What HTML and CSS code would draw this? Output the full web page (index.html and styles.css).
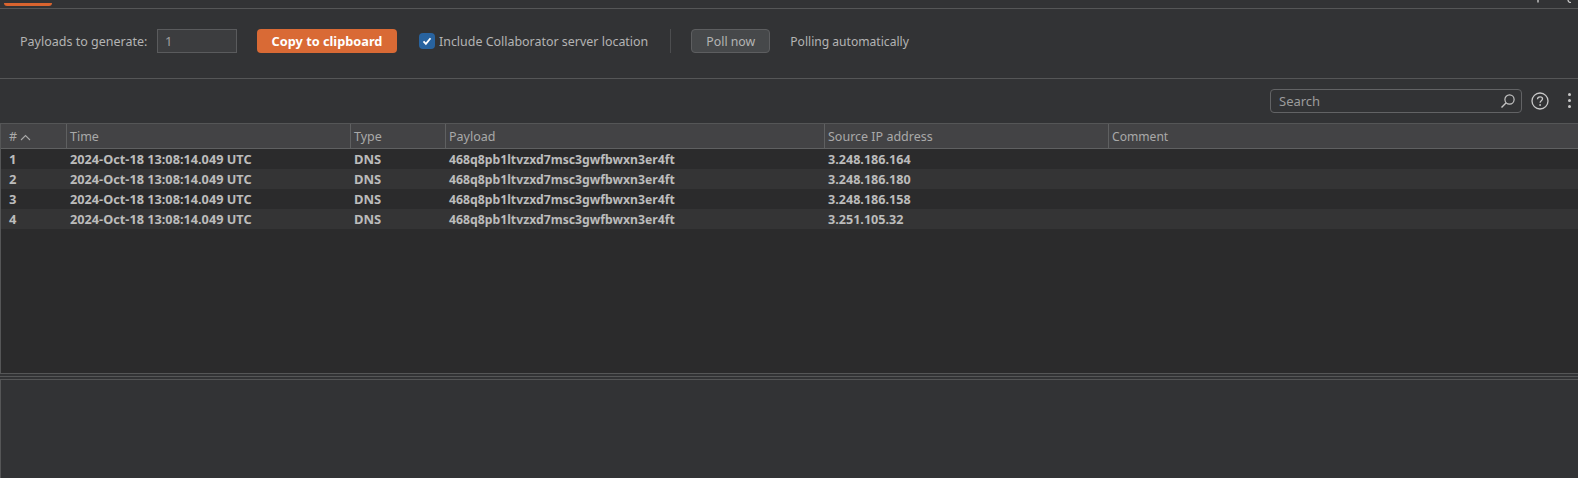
FILE: index.html
```html
<!DOCTYPE html>
<html lang="en">
<head>
<meta charset="utf-8">
<title>Collaborator</title>
<link rel="stylesheet" href="styles.css">
</head>
<body>
<div class="tabs">
  <div class="tab-mark"></div>
  <div class="corner-icons">
    <svg width="10" height="4" viewBox="0 0 10 4"><path d="M2 0v2.500" stroke="#c8c8c8" stroke-width="1.400" fill="none"/></svg>
    <svg width="10" height="4" viewBox="0 0 10 4"><path d="M4 0c0 1.500 1 2.500 3 2.500" stroke="#c8c8c8" stroke-width="1.200" fill="none"/></svg>
  </div>
</div>
<div class="controls">
  <span class="label label-payloads">Payloads to generate:</span>
  <div class="count-input">1</div>
  <button class="btn-primary">Copy to clipboard</button>
  <div class="check-wrap">
    <span class="check"><svg width="12" height="12" viewBox="0 0 12 12"><path d="M2.500 6.300l2.400 2.500 4.600-5.600" stroke="#fff" stroke-width="1.800" fill="none"/></svg></span>
    <span class="label label-include">Include Collaborator server location</span>
  </div>
  <div class="divider"></div>
  <button class="btn-secondary">Poll now</button>
  <span class="label status">Polling automatically</span>
</div>
<div class="search-bar">
  <div class="search">
    <span>Search</span>
    <svg width="16" height="16" viewBox="0 0 16 16"><circle cx="9.500" cy="6.500" r="4.600" stroke="#c4c4c4" stroke-width="1.200" fill="none"/><path d="M6.200 9.800L1.500 14.500" stroke="#c4c4c4" stroke-width="1.400" fill="none"/></svg>
  </div>
  <svg class="help" width="18" height="18" viewBox="0 0 18 18"><circle cx="9" cy="9" r="8" stroke="#c8c8c8" stroke-width="1.300" fill="none"/><path d="M6.500 7.200c0-1.600 1.100-2.400 2.600-2.400 1.400 0 2.400.8 2.400 2 0 1.900-2.400 1.900-2.400 3.900" stroke="#c8c8c8" stroke-width="1.300" fill="none"/><circle cx="9.100" cy="13" r=".9" fill="#c8c8c8"/></svg>
  <div class="dots"><i></i><i></i><i></i></div>
</div>
<div class="table">
  <div class="row head">
    <div class="c c1"># <svg width="11" height="7" viewBox="0 0 11 7"><path d="M1 6l4.500-4.500L10 6" stroke="#a8a8a8" stroke-width="1.100" fill="none"/></svg></div>
    <div class="c c2">Time</div>
    <div class="c c3">Type</div>
    <div class="c c4">Payload</div>
    <div class="c c5">Source IP address</div>
    <div class="c c6">Comment</div>
  </div>
  <div class="row item">
    <div class="c c1">1</div><div class="c c2">2024-Oct-18 13:08:14.049 UTC</div><div class="c c3">DNS</div><div class="c c4">468q8pb1ltvzxd7msc3gwfbwxn3er4ft</div><div class="c c5">3.248.186.164</div><div class="c c6"></div>
  </div>
  <div class="row item alt">
    <div class="c c1">2</div><div class="c c2">2024-Oct-18 13:08:14.049 UTC</div><div class="c c3">DNS</div><div class="c c4">468q8pb1ltvzxd7msc3gwfbwxn3er4ft</div><div class="c c5">3.248.186.180</div><div class="c c6"></div>
  </div>
  <div class="row item">
    <div class="c c1">3</div><div class="c c2">2024-Oct-18 13:08:14.049 UTC</div><div class="c c3">DNS</div><div class="c c4">468q8pb1ltvzxd7msc3gwfbwxn3er4ft</div><div class="c c5">3.248.186.158</div><div class="c c6"></div>
  </div>
  <div class="row item alt">
    <div class="c c1">4</div><div class="c c2">2024-Oct-18 13:08:14.049 UTC</div><div class="c c3">DNS</div><div class="c c4">468q8pb1ltvzxd7msc3gwfbwxn3er4ft</div><div class="c c5">3.251.105.32</div><div class="c c6"></div>
  </div>
</div>
<div class="split"></div>
<div class="detail"></div>
</body>
</html>
```
FILE: styles.css
```css
* { box-sizing: border-box; }
html, body { margin: 0; height: 100%; overflow: hidden; }
body {
  background: #323335;
  color: #b9b9b9;
  font: 13px/18px "Noto Sans", "Open Sans", sans-serif;
  display: flex;
  flex-direction: column;
  height: 478px;
}
.tabs {
  height: 9px;
  flex: none;
  border-bottom: 1px solid #555657;
  display: flex;
  justify-content: space-between;
  padding-left: 4px;
}
.tab-mark {
  width: 48px;
  height: 3px;
  margin-top: 3px;
  background: #d9642f;
  border-radius: 0 0 3px 3px;
}
.corner-icons { display: flex; gap: 18px; padding-right: 4px; }
.controls {
  flex: none;
  height: 70px;
  border-bottom: 1px solid #555657;
  display: flex;
  align-items: center;
  padding: 0 0 5px 20px;
}
.label { white-space: nowrap; color: #b4b4b4; padding-top: 2px; }
.label-payloads { font-size: 12.5px; width: 127px; flex: none; }
.label-include { font-size: 12.45px; }
.count-input {
  width: 80px;
  height: 24px;
  margin-left: 10px;
  padding: 2px 7px;
  background: #3c3d3f;
  border: 1px solid #5a5b5d;
  color: #a0a0a0;
}
.btn-primary {
  width: 140px;
  height: 24px;
  margin-left: 20px;
  padding: 0;
  border: 0;
  border-radius: 4px;
  background: #d96a35;
  color: #fff;
  font: bold 12.75px/24px "Noto Sans", sans-serif;
}
.check-wrap { display: flex; align-items: center; margin-left: 22px; gap: 4px; }
.check {
  width: 16px;
  height: 16px;
  border-radius: 4px;
  background: #28639f;
  display: flex;
  align-items: center;
  justify-content: center;
}
.divider { width: 1px; height: 24px; margin-left: 22px; background: #4c4d4f; }
.btn-secondary {
  width: 79px;
  height: 24px;
  margin-left: 20px;
  padding: 2px 0 0;
  border: 1px solid #5d5e60;
  border-radius: 4px;
  background: #46484a;
  color: #b4b4b4;
  font: 12.3px/20px "Noto Sans", sans-serif;
}
.status { margin-left: 20px; font-size: 12.1px; }
.search-bar {
  flex: none;
  height: 44px;
  display: flex;
  align-items: center;
  justify-content: flex-end;
  padding: 0 0 1px 0;
}
.search {
  width: 252px;
  height: 24px;
  border: 1px solid #626365;
  border-radius: 4px;
  display: flex;
  align-items: center;
  justify-content: space-between;
  padding: 0 5px 0 8px;
  color: #9c9c9c;
  margin-top: 1px;
}
.help { margin-left: 9px; }
.dots { display: flex; flex-direction: column; gap: 3px; margin: 0 7px 0 19px; }
.dots i { width: 3px; height: 3px; border-radius: 50%; background: #c8c8c8; display: block; }
.table {
  flex: none;
  height: 250px;
  background: #2b2b2c;
  border-top: 1px solid #555657;
  border-left: 1px solid #555657;
}
.row { display: flex; }
.head {
  height: 25px;
  background: #434345;
  border-bottom: 1px solid #5f6061;
  color: #a9a9a9;
  align-items: stretch;
  font-size: 12.5px;
}
.head .c { border-right: 1px solid #5f6061; line-height: 25px; }
.head .c6 { border-right: 0; font-size: 12.1px; }
.item {
  height: 20px;
  background: #2b2b2c;
  font-weight: bold;
  color: #bcbcbc;
  line-height: 21px;
}
.item.alt { background: #343435; }
.item .c2 { font-size: 12.72px; }
.item .c4 { font-size: 12.24px; }
.item .c5 { font-size: 12.6px; }
.c { padding-left: 3px; white-space: nowrap; flex: none; }
.c1 { width: 66px; padding-left: 8px; }
.c2 { width: 284px; }
.c3 { width: 95px; }
.c4 { width: 379px; }
.c5 { width: 284px; }
.c6 { flex: 1; }
.split {
  flex: none;
  height: 7px;
  border-bottom: 1px solid #555657;
  background: linear-gradient(#555657 0 1px, #323335 1px 3px, #555657 3px 4px, #323335 4px);
}
.detail { flex: 1; border-left: 1px solid #555657; background: #323335; }
```
